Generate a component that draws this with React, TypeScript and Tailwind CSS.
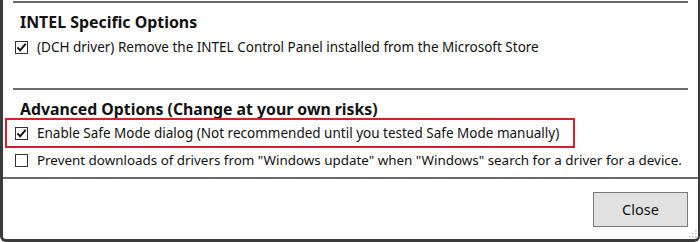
import React from "react";

function Check({ checked }: { checked: boolean }) {
  return (
    <div className="w-[13px] h-[13px] border border-[#333] bg-white flex items-center justify-center shrink-0">
      {checked && (
        <svg width="11" height="11" viewBox="0 0 11 11">
          <path d="M1.5 5.3 L4.2 8.3 L9.6 1.8" fill="none" stroke="#111" strokeWidth="2" />
        </svg>
      )}
    </div>
  );
}

export default function App() {
  return (
    <div
      className="w-[700px] h-[242px] bg-white relative overflow-hidden text-[#111]"
      style={{ fontFamily: '"Noto Sans", "Open Sans", sans-serif' }}
    >
      <div className="absolute inset-0 border-l-[3px] border-b-[3px] border-r-[2px] border-[#3a3a3a] rounded-b-[6px] pointer-events-none" />
      <div className="flex flex-col h-full pl-[3px] pr-[2px]">
        <div className="px-[10px]">
          <div className="h-[2px] bg-[#6b6b6b] mt-[1px]" />
        </div>
        <div className="pl-[17px] pt-[10px] text-[15.9px] font-bold leading-[18px] text-[#111]">
          INTEL Specific Options
        </div>
        <div className="flex items-center gap-[9px] pl-[12px] mt-[8px] text-[13.5px] leading-[16px]">
          <Check checked />
          <span>(DCH driver) Remove the INTEL Control Panel installed from the Microsoft Store</span>
        </div>
        <div className="px-[10px] mt-[33px]">
          <div className="h-[2px] bg-[#6b6b6b]" />
        </div>
        <div className="pl-[17px] pt-[10px] text-[15.8px] font-bold leading-[18px]">
          Advanced Options (Change at your own risks)
        </div>
        <div className="ml-[2px] w-[570px] h-[30px] border-2 border-[#d4202c] flex items-center gap-[9px] pl-[8px] text-[13.5px]">
          <Check checked />
          <span>Enable Safe Mode dialog (Not recommended until you tested Safe Mode manually)</span>
        </div>
        <div className="flex items-center gap-[9px] pl-[12px] mt-[4px] text-[13.4px] leading-[16px]">
          <Check checked={false} />
          <span className="whitespace-nowrap">Prevent downloads of drivers from "Windows update" when "Windows" search for a driver for a device.</span>
        </div>
        <div className="h-[2px] bg-[#6b6b6b] mt-[9px]" />
        <div className="flex-1 flex justify-end items-start pt-[13px] pr-[10px]">
          <button className="w-[95px] h-[35px] bg-[#e1e1e1] border border-[#7a7a7a] text-[14.5px] text-[#111]">
            Close
          </button>
        </div>
      </div>
      <svg className="absolute right-[3px] bottom-[4px]" width="10" height="10" viewBox="0 0 10 10">
        {[
          [8, 2], [8, 5], [5, 5], [8, 8], [5, 8], [2, 8],
        ].map(([x, y], i) => (
          <rect key={i} x={x} y={y} width="1.5" height="1.5" fill="#c0c0c0" />
        ))}
      </svg>
    </div>
  );
}
